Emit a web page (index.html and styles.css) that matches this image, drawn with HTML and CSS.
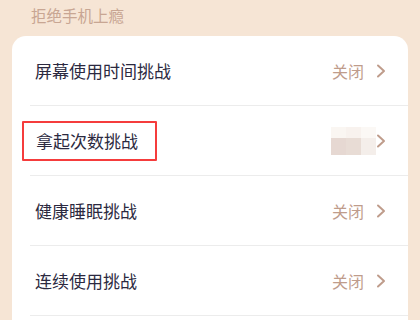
FILE: index.html
```html
<!DOCTYPE html>
<html lang="zh-CN">
<head>
    <meta charset="UTF-8">
    <title>拒绝手机上瘾</title>
    <link rel="stylesheet" href="styles.css">
</head>
<body>
    <div class="page">
        <div class="section-title">拒绝手机上瘾</div>
        <div class="card">
            <div class="row">
                <span class="label">屏幕使用时间挑战</span>
                <span class="value">关闭</span>
                <svg class="chevron" viewBox="0 0 10 14"><path d="M2 1.5 L8 7 L2 12.5" /></svg>
            </div>
            <div class="row">
                <span class="label marked">拿起次数挑战</span>
                <span class="mosaic">
                    <i style="background:#faf6f2"></i><i style="background:#f8f2ee"></i><i style="background:#fbf8f5"></i>
                    <i style="background:#e6d8d2"></i><i style="background:#e8dcd5"></i><i style="background:#f4eeea"></i>
                </span>
                <svg class="chevron" viewBox="0 0 10 14"><path d="M2 1.5 L8 7 L2 12.5" /></svg>
            </div>
            <div class="row">
                <span class="label">健康睡眠挑战</span>
                <span class="value">关闭</span>
                <svg class="chevron" viewBox="0 0 10 14"><path d="M2 1.5 L8 7 L2 12.5" /></svg>
            </div>
            <div class="row">
                <span class="label">连续使用挑战</span>
                <span class="value">关闭</span>
                <svg class="chevron" viewBox="0 0 10 14"><path d="M2 1.5 L8 7 L2 12.5" /></svg>
            </div>
        </div>
    </div>
</body>
</html>
```

FILE: styles.css
```css
html, body {
    margin: 0;
    padding: 0;
}
body {
    width: 420px;
    height: 320px;
    overflow: hidden;
    background: #f6e5d5;
    font-family: "Noto Sans CJK SC", "Noto Sans", sans-serif;
}
.page {
    padding: 0 12px;
}
.section-title {
    height: 36px;
    padding-left: 19px;
    font-size: 15.5px;
    line-height: 30px;
    color: #c8a693;
}
.card {
    background: #fff;
    border-radius: 14px 14px 0 0;
    padding-left: 18px;
    height: 300px;
}
.row {
    display: flex;
    align-items: center;
    height: 69px;
    border-bottom: 1px solid #ececec;
    padding-right: 22px;
}
.label {
    flex: 1;
    font-size: 17px;
    color: #2b2940;
    padding-left: 5px;
}
.label.marked {
    flex: 0 0 auto;
    margin-right: auto;
    margin-left: -8px;
    padding: 5px 17px 6px 12px;
    border: 2px solid #f53c3c;
    border-radius: 1px;
}
.value {
    font-size: 16px;
    color: #bf9c8b;
    margin-right: 12px;
}
.mosaic {
    display: grid;
    grid-template-columns: repeat(3, 15px);
    grid-template-rows: 11px 17px;
}
.mosaic i {
    display: block;
}
.chevron {
    width: 10px;
    height: 14px;
    fill: none;
    stroke: #bf9c8b;
    stroke-width: 2;
    stroke-linecap: round;
    stroke-linejoin: round;
}
```
